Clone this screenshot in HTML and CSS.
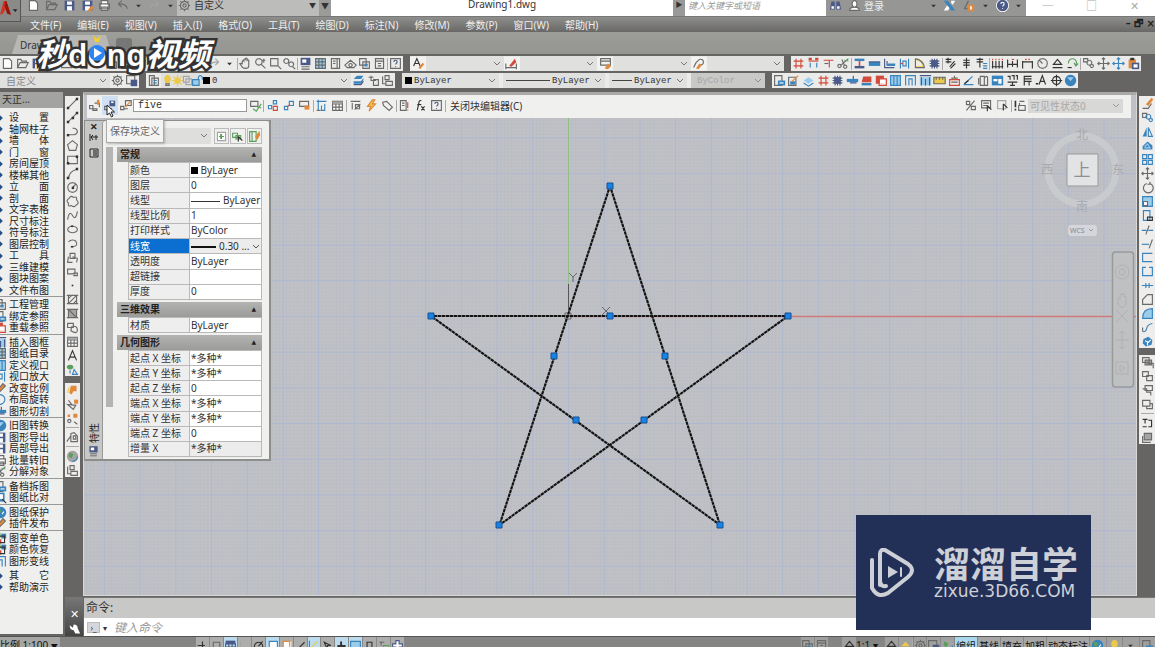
FILE: index.html
```html
<!DOCTYPE html>
<html lang="zh-CN">
<head>
<meta charset="utf-8">
<title>Drawing1.dwg</title>
<link rel="stylesheet" href="styles.css">
</head>
<body>
<div class="app">
  <header class="title">
    <div class="quick"><div class="tools plain" data-tools="new open save saveas print undo dot redo dot"></div>
      <label class="workspace-pick"><span class="ico" data-icon="gear"></span><select aria-label="工作空间"><option>自定义</option></select></label><span class="tri">▼</span></div>
    <h1>Drawing1.dwg</h1>
    <span class="arrow">▶</span>
    <input class="search" aria-label="搜索" placeholder="键入关键字或短语">
    <div class="account"><div class="tools plain two" data-tools="binoc user"></div><a href="#login">登录</a><div class="tools plain five" data-tools="dot exchange share dot help dot"></div></div>
    <div class="win"><button>─</button><button>□</button><button>✕</button></div>
    <button class="logo" aria-label="应用程序菜单"><svg viewBox="0 0 22 22"><path d="M0 15L4 0h3l5 15-4-1-2-5-3 5z" fill="#d8321f"/><path d="M6 0h1l5 15-4-1-3-9z" fill="#8d1a10"/><path d="M14 9h5l-2 3z" fill="#222"/></svg></button>
  </header>
  <nav class="menu"><a href="#f">文件(F)</a><a href="#e">编辑(E)</a><a href="#v">视图(V)</a><a href="#i">插入(I)</a><a href="#o">格式(O)</a><a href="#t">工具(T)</a><a href="#d">绘图(D)</a><a href="#n">标注(N)</a><a href="#m">修改(M)</a><a href="#p">参数(P)</a><a href="#w">窗口(W)</a><a href="#h">帮助(H)</a><span class="doc">– 🗗 ×</span></nav>
  <div class="tabs"><button class="tab">Drawing1</button><span class="plus"></span></div>
  <div class="bars">
    <div class="row">
      <div class="bar g403"><div class="tools std" data-tools="new open save print sheet zoomw cut copy paste brush undo dot undo dot redo2 dot | pan zoom zoomw zoomp | props calc page tree sheets table2 | help2"></div></div>
      <div class="bar g374"><span class="ico" data-icon="textstyle"></span><select aria-label="文字样式"><option></option></select><span class="ico" data-icon="dimstyle"></span><select aria-label="标注样式"><option></option></select><span class="ico" data-icon="tabstyle"></span><select aria-label="表格样式"><option></option></select><span class="ico" data-icon="leader"></span><select aria-label="引线样式"><option></option></select></div>
      <div class="bar g350"><div class="tools" data-tools="hash axis axis2 scissors | column wall wall2 door arc block | rebar bar2 bar3 | dims dimh dimh2 circle2 level loop | copyc move moveb clip"></div></div>
    </div>
    <div class="row">
      <div class="bar g139"><select class="dim" aria-label="工作空间"><option>自定义</option></select><div class="tools pair" data-tools="gear savews"></div></div>
      <div class="bar g248"><span class="ico" data-icon="layers"></span><div class="layer"><div class="tools four" data-tools="bulb sun freeze lock"></div><span class="sw"></span><select class="mono" aria-label="图层"><option>0</option></select></div><div class="tools three" data-tools="layer2 layprev laystate"></div></div>
      <div class="bar g363 bylayer"><label class="c95"><span class="sw"></span><select class="mono" aria-label="颜色"><option>ByLayer</option></select></label><label class="c102"><span class="ln"></span><select class="mono short" aria-label="线型"><option>ByLayer</option></select></label><label class="c78"><span class="ln"></span><select class="mono short" aria-label="线宽"><option>ByLayer</option></select></label><label class="c74 off"><select class="mono" disabled aria-label="打印样式"><option>ByColor</option></select></label></div>
      <div class="bar g306"><div class="tools" data-tools="page2 pencilp layer3 hash block wall3 brickr copyr grid2 gate win ruler house slope sheetg tableb scale flag textA target globe"></div></div>
    </div>
  </div>
  <div class="work">
    <aside class="tree">
      <h2>天正...</h2>
      <ul>
        <li class="sp"><i></i><span>设</span><span>置</span></li><li><i></i>轴网柱子</li><li class="sp"><i></i><span>墙</span><span>体</span></li><li class="sp"><i></i><span>门</span><span>窗</span></li><li><i></i>房间屋顶</li><li><i></i>楼梯其他</li><li class="sp"><i></i><span>立</span><span>面</span></li><li class="sp"><i></i><span>剖</span><span>面</span></li><li><i></i>文字表格</li><li><i></i>尺寸标注</li><li><i></i>符号标注</li><li><i></i>图层控制</li><li class="sp"><i></i><span>工</span><span>具</span></li><li><i></i>三维建模</li><li><i></i>图块图案</li><li><i></i>文件布图</li>
        <li class="sep"></li>
        <li><b data-icon="sheets"></b>工程管理</li><li><b data-icon="page2"></b>绑定参照</li><li><b data-icon="copyr"></b>重载参照</li>
        <li class="sep"></li>
        <li><b data-icon="win"></b>插入图框</li><li><b data-icon="calc"></b>图纸目录</li><li><b data-icon="grid2"></b>定义视口</li><li><b data-icon="door"></b>视口放大</li><li><b data-icon="brush"></b>改变比例</li><li><b data-icon="rotb"></b>布局旋转</li><li><b data-icon="wall3"></b>图形切割</li>
        <li class="sep"></li>
        <li><b data-icon="globe"></b>旧图转换</li><li><b data-icon="save"></b>图形导出</li><li><b data-icon="save"></b>局部导出</li><li><b data-icon="print"></b>批量转旧</li><li><b data-icon="scissors"></b>分解对象</li>
        <li class="sep"></li>
        <li><b data-icon="page2"></b>备档拆图</li><li><b data-icon="zoomb"></b>图纸比对</li>
        <li class="sep"></li>
        <li><b data-icon="globeg"></b>图纸保护</li><li><b data-icon="brush"></b>插件发布</li>
        <li class="sep"></li>
        <li><b data-icon="colors"></b>图变单色</li><li><b data-icon="colors"></b>颜色恢复</li><li><b data-icon="gate"></b>图形变线</li>
        <li class="sep clear"></li>
        <li class="sp"><i></i><span>其</span><span>它</span></li><li><i></i>帮助演示</li>
      </ul>
    </aside>
    <div class="main">
      <div class="stage">
        <div class="side">
          <div class="tools vert" data-tools="line xline pline polygon rect arc2 circle cloud spline ellipse earc insert mkblock point hatch grad region table A addsel"></div>
          <div class="tools vert" data-tools="bulbo brusho ptso | shape | globeg2 laystate"></div>
        </div>
        <main class="frame">
          <div class="bedit">
            <div class="tools b3" data-tools="bedit bsave bsaveas"></div>
            <input class="mono name" aria-label="块名" value="five">
            <div class="tools b15" data-tools="bcheck | bpar bcon battr | bdim table | bprop bolt tag | bvar fx help2 |"></div>
            <button class="close">关闭块编辑器(C)</button>
            <div class="tools b4" data-tools="pct vis1 vis2 | vis3"></div>
            <select class="vis" disabled aria-label="可见性状态"><option>可见性状态0</option></select>
          </div>
          <div class="canvas">
            <svg class="drawing" viewBox="84 118 1052 478" preserveAspectRatio="xMinYMin slice">
              <defs>
                <pattern id="minor" x="568" y="316" width="3.57" height="3.57" patternUnits="userSpaceOnUse"><path d="M0 0H3.57M0 0V3.57" stroke="#b0b5c6" stroke-width=".4"/></pattern>
                <pattern id="major" x="568" y="316" width="35.7" height="35.7" patternUnits="userSpaceOnUse"><path d="M0 .5H35.7M.5 0V35.7" stroke="#acb5d4" stroke-width=".8"/></pattern>
              </defs>
              <path fill="url(#minor)" d="M84 118h1052v478H84z"/><path fill="url(#major)" d="M84 118h1052v478H84z"/>
              <path d="M568.500 118V316" stroke="#92bd8c"/><path d="M568 316.500H1136" stroke="#d07a7a" stroke-width="1.500"/>
              <g stroke="#888" fill="none"><path d="M568.500 284v32" stroke="#555"/><path d="M565 313h6v6h-6zM569 273l4 4 4-4M573 277v5M602 307l8 8M610 307l-8 8" stroke="#666"/></g>
              <path d="M610 186L720 525 431 316H788L499.500 525z" fill="none" stroke="#77787a" stroke-width="2"/>
              <path d="M610 186L720 525 431 316H788L499.500 525z" fill="none" stroke="#111" stroke-width="2" stroke-dasharray="3 1"/>
              <g fill="#1683e8" stroke="#1b4f8c"><path d="M607 183h6v6h-6zM785 313h6v6h-6zM717 522h6v6h-6zM496 522h6v6h-6zM428 313h6v6h-6zM607 313h6v6h-6zM662 353h6v6h-6zM641 417h6v6h-6zM573 417h6v6h-6zM551 353h6v6h-6z"/></g>
              <circle cx="1082" cy="170" r="34" fill="none" stroke="#c9cace" stroke-width="7"/>
              <path d="M1067 154h31v32h-31z" fill="#e2e3e5" stroke="#999"/>
              <g class="compass" text-anchor="middle"><text x="1082" y="139">北</text><text x="1082" y="211">南</text><text x="1047" y="174">西</text><text x="1118" y="174">东</text><text class="up" x="1082" y="176">上</text></g>
              <rect x="1068" y="225" width="29" height="11" rx="3" fill="#d5d6dc"/><text class="wcs" x="1070" y="233">WCS</text><path d="M1089 229l2 2 2-2" fill="none" stroke="#999"/>
              <rect x="1112.500" y="252" width="21" height="135" rx="3" fill="#bfc0c2" stroke="#999a9c" stroke-width="1.500"/>
              <g fill="none" stroke="#b0b1b4"><circle cx="1122" cy="272" r="7"/><circle cx="1122" cy="272" r="3"/><path d="M1118 305v-6q1-2 2 0v-4q1-2 2 0v-1q1-2 2 0v3q1-2 2 0v7q-3 6-8 1zM1116 310l12 12M1128 310l-12 12M1122 331v18M1115 340h14M1119 334l3-3 3 3M1119 346l3 3 3-3M1116 362h12v12h-12zM1120 365l5 3-5 4z"/></g>
            </svg>
            <section class="palette">
              <div class="grip"><span class="x">✕</span><svg viewBox="0 0 10 28"><path d="M1 3v7M2 6h7M4 4L2 6l2 3M7 4v5M1 18h8v8H1z" stroke="#222" fill="none"/><path d="M4 20h4M4 22h4M4 24h4" stroke="#111"/></svg><span class="cap">特性</span><b data-icon="props"></b></div>
              <div class="pbody">
                <div class="ptop"><select aria-label="对象类型"><option></option></select><div class="tools" data-tools="addg picksel quick"></div></div>
                <h3>常规<i>▲</i></h3>
                <table class="t9"><tr><th>颜色</th><td><span class="sw"></span> ByLayer</td></tr><tr><th>图层</th><td>0</td></tr><tr><th>线型</th><td><span class="thin"></span>ByLayer</td></tr><tr><th>线型比例</th><td>1</td></tr><tr><th>打印样式</th><td>ByColor</td></tr><tr class="on"><th>线宽</th><td><span class="thick"></span>0.30 ...<svg viewBox="0 0 8 6"><path d="M1 1l3 3 3-3" fill="none" stroke="#555"/></svg></td></tr><tr><th>透明度</th><td>ByLayer</td></tr><tr><th>超链接</th><td></td></tr><tr><th>厚度</th><td>0</td></tr></table>
                <h3>三维效果<i>▲</i></h3>
                <table class="t1"><tr><th>材质</th><td>ByLayer</td></tr></table>
                <h3>几何图形<i>▲</i></h3>
                <table class="t7"><tr><th>起点 X 坐标</th><td>*多种*</td></tr><tr><th>起点 Y 坐标</th><td>*多种*</td></tr><tr><th>起点 Z 坐标</th><td>0</td></tr><tr><th>端点 X 坐标</th><td>*多种*</td></tr><tr><th>端点 Y 坐标</th><td>*多种*</td></tr><tr><th>端点 Z 坐标</th><td>0</td></tr><tr class="ro"><th>增量 X</th><td>*多种*</td></tr></table>
              </div>
            </section>
            <div class="tip" role="tooltip">保存块定义</div>
            <svg class="cursor" viewBox="0 0 10 14"><path d="M1 1v10l2.500-2 2 4 1.500-1-2-4h3.500z" fill="#fff" stroke="#222"/></svg>
          </div>
        </main>
        <div class="side right">
          <div class="tools vert" data-tools="erase copyb mirror offset array move rotate scaleb stretch trim extend brk1 brk2 join chamfer fillet blend explode"></div>
          <div class="tools vert" data-tools="ord1 ord2 ord3 ord4 | textord hatchord"></div>
        </div>
      </div>
      <div class="cmd">
        <div class="handle"><span>✕</span><b data-icon="wrench"></b></div>
        <div class="lines"><div class="hist">命令:</div><label class="entry"><span class="prompt">›_</span><span class="tri">▾</span><input aria-label="命令行" placeholder="键入命令"></label></div>
      </div>
    </div>
  </div>
  <footer class="status">
    <span class="ratio">比例 1:100 <small>▼</small></span>
    <div class="tools" data-tools="stplus stsnap sgrid stgrey stpol stw sto stang stblue stcur stcross sfill strect stgreen stplus2"></div>
    <div class="sright"><div class="tools s2" data-tools="sheets table2"></div><div class="tools s1" data-tools="level"></div><span>1:1 ▾</span><div class="tools s5" data-tools="level level2 | gear savews globeg2"></div><button class="act">编组</button><button>基线</button><button>填充</button><button>加粗</button><button>动态标注</button><div class="tools s4" data-tools="globeg bulb dot page2"></div></div>
  </footer>
  <div class="mark"><span class="zh">秒</span><span class="en">d</span><span class="en play"><span>o</span><svg viewBox="0 0 20 30"><path d="M6 0l4 4 4-4-2 7H8z" fill="#f5d02a"/><circle cx="10" cy="18" r="8" fill="#2d86f0"/><path d="M7 13l8 5-8 5z" fill="#fff"/></svg></span><span class="en">ng</span><span class="zh">视频</span></div>
  <div class="brand"><svg viewBox="0 0 46 50" fill="none" stroke="#cdd0d6" stroke-linecap="round"><path d="M10 37V6q0-5 5-4l23 14q8 6 0 13L18 45q-10 6-16-5V12" stroke-width="4" stroke-linejoin="round"/><path d="M10 32q0 7 6 6" stroke-width="4"/><path d="M18 18l10 6-10 6z" fill="#cdd0d6" stroke="none"/><path d="M31 20v8" stroke-width="2"/></svg><div><strong>溜溜自学</strong><span>zixue.3D66.COM</span></div></div>
</div>
<script src="app.js"></script>
</body>
</html>
```
FILE: styles.css
```css
*{box-sizing:border-box}
body{margin:0;height:100vh;overflow:hidden;font:10px "Noto Sans","Noto Sans CJK SC",sans-serif;color:#333;background:#666563}
button,input,select{font:inherit;color:inherit;border:0;padding:0;margin:0;background:none;border-radius:0;min-width:0}
a{color:inherit;text-decoration:none}
h1,h2,h3,ul{margin:0;padding:0;font-weight:400;font-size:10px}
select{appearance:none;flex:1;height:100%;padding:0 2px;background:url("data:image/svg+xml,%3Csvg xmlns='http://www.w3.org/2000/svg' width='8' height='6'%3E%3Cpath d='M1 1l3 3 3-3' fill='none' stroke='%23777'/%3E%3C/svg%3E") no-repeat right 3px center;overflow:hidden}
.mono{font-family:"Liberation Mono","Noto Sans CJK SC",monospace}
.app{position:relative;display:flex;flex-direction:column;height:calc(100vh + 6px)}

.tools{display:flex;align-items:center;flex:1;min-width:0;height:100%}
.tools button{flex:1;height:100%;display:flex;align-items:center;justify-content:center}
.tools svg,[data-icon] svg{width:13px;height:13px;flex:none;display:block}
.tools .bar-sep{width:1px;height:12px;background:#aaa;flex:none}
.ico{display:flex;align-items:center;justify-content:center;width:15px;flex:none}
.vert{flex-direction:column;background:#eeedec;height:auto}
.vert button{width:100%}
.vert .bar-sep{width:13px;height:1px}
.sw{width:7px;height:7px;background:#000;display:inline-block;flex:none}
.tri{font-size:8px}

.title{display:flex;height:22px;margin-top:-6px;flex:none;align-items:stretch;background:#fff}
.quick{width:331px;padding-left:25px;background:#9b9b9a;display:flex;align-items:center}
.quick .tools{flex:none;width:152px}
.plain button[aria-label="dot"]{flex:none;width:14px}
.workspace-pick{flex:1;display:flex;height:100%;background:#bcbcbb;align-items:center}
.workspace-pick select{background:none}
.workspace-pick::after{content:"▼";font-size:7px;padding-right:3px}
.quick .tri{width:12px;text-align:center}
h1{flex:1;text-align:center;line-height:20px;font-size:10px}
.arrow{width:12px;background:#999;font-size:7px;line-height:22px;text-align:center}
.search{width:141px;font-size:9px;font-style:italic;padding-left:3px}
.search::placeholder,.entry input::placeholder{color:#999}
.account{width:200px;background:#969695;display:flex;align-items:center;color:#eee}
.account .two{flex:none;width:38px}
.account a{width:62px}
.win{width:129px;display:flex;justify-content:space-around;color:#aaa;font-size:11px}
.logo{position:absolute;left:0;top:0;width:21px;height:22px;background:#8a8a89;border-right:1px solid #555;border-bottom:1px solid #555}
.logo svg{display:block}

.menu{height:16px;flex:none;display:flex;align-items:center;gap:16px;padding-left:30px;color:#eee;background:linear-gradient(#8e8e8c,#696866);border-top:1px solid #777}
.doc{margin-left:auto;color:#222;font:bold 10px "DejaVu Sans",sans-serif}
.tabs{height:22px;flex:none;background:linear-gradient(#9d9d9a,#949491);display:flex;align-items:flex-end;padding-left:12px}
.tab{width:100px;height:19px;padding-left:8px;text-align:left;background:#b7b7b5;clip-path:polygon(0 100%,6px 0,94px 0,100% 100%)}
.plus{width:16px;height:12px;margin:0 0 4px 4px;background:#777;border-radius:3px}

.bars{flex:none;padding:2px 0;display:flex;flex-direction:column;gap:2px;height:36px}
.row{display:flex;gap:7px;height:15px}
.bar{display:flex;background:#ebebea;flex:none;align-items:center}
.bar select{background-color:#e0e0df}
.g403{width:403px}.g374{width:374px}.g350{width:350px}.g139{width:139px}.g248{width:249px}.g363{width:363px}.g306{width:306px}
.g374 .ico{width:16px;background:#f2f2f1}
.dim{color:#888}
.bar .dim{padding-left:6px}
.pair{flex:none;width:29px}
.layer{flex:1;display:flex;align-items:center;background:#e0e0df;height:100%}
.four{flex:none;width:42px;padding-left:1px}.three{flex:none;width:44px}
.bylayer{gap:4px}
.bylayer label{display:flex;align-items:center;height:100%;background:#e0e0df}
.bar .mono{font-size:9px}
.bylayer .sw{margin-left:3px}
.c95{width:97px}.c102{width:102px}.c78{width:78px}.c74{width:74px}
.ln{flex:1;height:1px;background:#444;margin-left:3px}
.bylayer .short{flex:none;width:55px}
.off{color:#999}.bylayer .off,.off select{background-color:#c9c9c8}
.bylayer .off select{padding-left:6px}

.work{flex:1;min-height:0;display:flex}
.tree{width:63px;margin:2px 2px 2px 0;background:#efefee;display:flex;flex-direction:column;flex:none}
.tree h2{height:16px;line-height:15px;padding-left:2px;background:#a3a3a2}
.tree ul{flex:1;min-height:0;margin:4px 0 41px;display:flex;flex-direction:column;list-style:none}
.tree li{flex:1;min-height:0;display:flex;align-items:center;padding-left:9px;position:relative;line-height:11px;color:#222}
.tree li.sp{justify-content:space-between;padding-right:14px}
.tree li i{position:absolute;left:-2px;width:4px;height:4px;background:#234e86;transform:rotate(45deg)}
.tree li b{position:absolute;left:-6px}
.tree li.sep{flex:none;height:3px;border-top:1px solid #999}
.tree li.clear{border:0}
.main{flex:1;min-width:0;display:flex;flex-direction:column}
.stage{flex:1;min-height:0;display:flex}
.side{width:15px;flex:none;display:flex;flex-direction:column;gap:7px;padding-top:6px}
.side .tools{flex:none}
.side button{flex:none;height:14px}
.side .bar-sep{margin:2px 0}
.right{width:16px;margin-left:2px}
.frame{flex:1;min-width:0;margin:2px 0 1px 3px;border:1px solid #d8d8d8;border-top:3px solid #a9a9a8;display:flex;flex-direction:column;background:#c0c1c5}
.bedit{height:23px;margin:0 5px 0 3px;background:#f0f0ef;display:flex;align-items:center;padding:1px 8px 3px 0;flex:none}
.b3{flex:none;width:46px}
.b3 button:nth-child(2){background:#cfe0f3}
.name{width:114px;height:13px;border:1px solid #999;background:#fff;padding-left:4px}
.b15{flex:none;width:199px}
.close{padding-left:4px}
.b4{flex:none;width:66px;margin-left:auto}
.vis{flex:none;width:95px;background-color:#cfcfce;color:#888;height:14px}
.canvas{flex:1;min-height:0;position:relative}
.drawing{position:absolute;inset:0;width:100%;height:100%}
.compass{font-size:12px;fill:#a8a9ae}
.compass .up{font-size:17px;fill:#8a9097}
.wcs{font-size:7px;fill:#888}

.palette{position:absolute;left:0;top:2px;width:187px;height:341px;display:flex;background:#c7c7c6;border:1px solid #8d8d8d;border-right-width:2px;border-bottom-width:2px}
.grip{width:17px;display:flex;flex-direction:column;align-items:center;padding-top:1px;flex:none;color:#222}
.grip .x{font-size:9px;line-height:9px;font-weight:700}
.grip svg{width:10px;height:28px}
.grip .cap{margin-top:auto;writing-mode:vertical-rl;text-orientation:sideways;transform:rotate(180deg);line-height:14px}
.grip b svg{width:11px;height:16px}
.pbody{flex:1;min-width:0;background:linear-gradient(#b4b4b4,#b4b4b4) 3px 26px/7px 260px no-repeat #f0f0ef;border-left:1px solid #999;padding:7px 7px 0 14px;border-radius:3px 3px 0 0}
.ptop{height:16px;display:flex;gap:3px;margin-bottom:3px}
.ptop select{background-color:#dededd}
.ptop .tools{flex:none;width:48px;gap:1px}
.ptop button{border:1px solid #bbb}
h3{height:15px;line-height:14px;background:linear-gradient(#b3b3b2,#9b9b9a);font-weight:700;padding:0 6px 0 3px;display:flex;justify-content:space-between;color:#222}
h3 i{font:6px "DejaVu Sans";line-height:14px}
table{border-collapse:collapse;width:calc(100% - 11px);margin:0 0 2px 11px;table-layout:fixed}
.t9{height:138px}.t1{height:16px}.t7{height:107px}
th,td{border:1px solid #b9b9b9;padding:0 0 0 1px;font-weight:400;text-align:left;line-height:13px;white-space:nowrap;overflow:hidden}
th{width:61px;background:#eee}
td{background:#fff}
.on th{background:#0a6fd0;color:#fff}
.on td,.ro td{background:#ececec}
.thin,.thick{display:inline-block;vertical-align:middle;width:29px;height:1px;background:#333;margin-right:3px}
.thick{width:25px;height:2px;background:#111}
.on svg{width:8px;height:6px;margin-left:3px}
.tip{position:absolute;left:22px;top:1px;padding:0 3px;height:24px;line-height:22px;background:#f4f4f3;border:1px solid #aaa;color:#666;box-shadow:1px 1px 2px #8888}
.cursor{position:absolute;left:22px;top:-14px;width:10px;height:14px}

.cmd{height:39px;flex:none;display:flex}
.handle{width:18px;display:flex;flex-direction:column;align-items:center;gap:1px;padding-top:9px;color:#fff;background:linear-gradient(#777,#444);flex:none;font-size:11px;line-height:15px}
.lines{flex:1;margin-left:1px;display:flex;flex-direction:column;border-top:1px solid #777}
.hist{flex:1;background:#c8c8c6;padding-left:2px;font-size:12px;line-height:20px}
.entry{height:18px;background:#fff;display:flex;align-items:center;padding-left:3px;gap:3px}
.prompt{width:13px;height:11px;line-height:9px;background:#d5d6dc;border:1px solid #bbb;font-size:8px;text-align:center}
.entry input{flex:1;font-size:12px;font-style:italic;padding-left:4px}

.status{height:17px;flex:none;display:flex;background:#858583;border-top:1px solid #555}
.ratio{width:60px;background:#a6a6a4;line-height:16px;color:#111;white-space:nowrap}
.ratio small{font-size:7px}
.status>.tools{flex:none;width:209px;margin-left:136px;background:#adadab}
.status>.tools button{border-right:1px solid #888}
.status>.tools button:is(:nth-child(3),:nth-child(6),:nth-child(9),:nth-child(11),:nth-child(12)){background:#bcdcee}
.sright{margin-left:auto;width:355px;display:flex;align-items:center;color:#111}
.sright span{width:28px}
.sright .bar-sep{width:1px}
.sright button{border-left:1px solid #888}
.sright>button{background:#a6a6a4;height:100%;padding:0 1px}
.sright>.act{background:#a9d8ee}
.sright .tools{background:#a0a09e}
.sright .s2{flex:none;width:28px}.sright .s1{flex:none;width:15px;margin-left:13px}.sright .s5{flex:none;width:70px}

.mark{position:absolute;left:36px;top:32px;display:flex;align-items:center;height:40px;color:#fff;-webkit-text-stroke:5px #333;paint-order:stroke fill;font-weight:700}
.mark .zh{font-family:"Noto Sans CJK SC",sans-serif;font-size:32px;font-style:italic;line-height:40px}
.mark .en{font-family:"Noto Sans",sans-serif;font-size:31px;font-weight:600;line-height:40px;padding-top:4px}
.mark .play{position:relative}
.mark svg{position:absolute;left:0;top:5px;width:20px;height:30px}
.brand{position:absolute;right:64px;bottom:23px;width:235px;height:115px;background:#222f56;color:#cdd0d6;display:flex;align-items:center;gap:18px;padding-left:14px}
.brand svg{width:46px;height:50px}
.brand div{display:flex;flex-direction:column;gap:3px}
.brand strong{font:700 36px/34px "Noto Sans CJK SC",sans-serif}
.brand span{font:17px/18px "DejaVu Sans",sans-serif}
```
FILE: app.js
```js
// Each icon lists parts "<colour>[f] <path>" on a 16x16 grid; "f" fills the path.
const C = {k:'#6a6a6a',d:'#333',s:'#a4a4a4',b:'#3a84bd',l:'#9accec',r:'#d24a3a',g:'#5aa05c',o:'#e0893a',y:'#ecc94a',w:'#fff',n:'#4a5a88'};
const I = {
new:'wf M3 2h7l3 3v9H3z;k M3 2h7l3 3v9H3z',
open:'k M2 13V3h4l1 2h6v2M2 13l3-6h10l-3 6z',
save:'nf M2 2h12v12H2z;wf M5 3h6v4H5zM5 9h6v5H5z',
saveas:'nf M2 2h12v12H2z;wf M5 3h6v4H5zM5 9h6v5H5z;of M8 14l5-6 3 2-5 6z',
print:'wf M4 2h8v12H4z;k M4 6V2h8v4M2 6h12v6H2zM4 10h8v4H4z',
undo:'k M14 12C13 7 9 6 4 6M7 2L3 6l4 4', redo:'s M2 12C3 7 7 6 12 6M9 2l4 4-4 4', redo2:'s M2 12C3 7 7 6 12 6M9 2l4 4-4 4',
dot:'df M5 7h6l-3 3z',
gear:'k M8 3a5 5 0 1 0 .1 0M8 6a2 2 0 1 0 .1 0M8 1v2M8 13v2M1 8h2M13 8h2M3 3l1 1M12 12l1 1M13 3l-1 1M4 12l-1 1',
binoc:'nf M3 3h4v10H1zM9 3h4l2 10H9z;wf M3 9h3v3H3zM10 9h3v3h-3z', user:'wf M8 2a3 4 0 1 0 .1 0M2 14q0-4 6-4t6 4z;k M8 2a3 4 0 1 0 .1 0M2 14q0-4 6-4t6 4z',
exchange:'bf M1 2h5l9 12h-5z;wf M10 2h5l-3 5-2-2zM1 14h5l2-3-3-3z', share:'k M8 2L3 12h6;of M7 7h8v8H7z;wf M10 9h2v4h-2z',
help:'wf M8 0a8 8 0 1 0 .1 0;nf M8 1a7 7 0 1 0 .1 0;w M6 6q0-2 2-2t2 2q0 1-2 3M8 11v1', help2:'k M2 2h12v12H2z;n M6 6q0-2 2-2t2 2q0 1-2 3M8 11v1',
pan:'k M4 9V5q1-1 2 0V3q1-1 2 0V2q1-1 2 0v2q1-1 2 0v7q0 3-4 3t-5-3L1 8q1-1 3 1',
zoom:'k M6 2a4 4 0 1 0 .1 0M9 9l5 5M12 2v5M10 4h4', zoomw:'k M2 2h9v9H2zM11 11l4 4', zoomp:'k M4 2a3 3 0 1 0 .1 0M10 6a3 3 0 1 0 .1 0M12 12l3 3', zoomb:'bf M2 2h11v11H2z;wf M5 4h6v6H5z;d M10 10l5 5',
props:'nf M2 1h12v9H2z;wf M4 3h5v4H4z;k M3 12h10M3 15h10', calc:'lf M2 2h12v12H2z;k M2 2h12v12H2zM2 6h12M2 10h12M6 2v12M10 2v12',
page:'k M3 2h10v12H3zM10 2v12M5 5h3M5 8h3', tree:'k M1 10l7-6 7 6-3 3H4zM8 8a2 2 0 1 0 .1 0', sheets:'k M2 2h8v8H2zM6 6h8v8H6z;b M8 9h4M8 11h4', table2:'k M3 2h10v12H3zM3 5h10M6 8h4M6 11h4',
sheet:'k M2 3h12v10H2z',cut:'k M4 2l7 11M12 2L5 13',copy:'k M2 2h8v8H2zM6 6h8v8H6z',paste:'k M3 3h10v11H3z',brush:'of M2 13l9-11 3 3-9 9z;k M2 13l9-11 3 3-9 9z',
textstyle:'d M2 11L6 2l4 9M4 8h5;of M8 13l5-6 2 2-5 6z', dimstyle:'k M1 13h13M1 8v7M14 8v7;rf M5 11l7-9 2 4-6 6z', tabstyle:'k M2 2h12v8H2zM2 5h12;of M7 14l4-6 4 3-4 4z', leader:'k M2 13l3-6 4-4q5-1 5 3t-5 4;of M5 14l4-6 3 2-4 5z',
hash:'r M5 2v12M11 2v12M2 5h12M2 11h12', axis:'r M2 5h12;b M4 7v6M12 7v6;rf M2 1h4v3H2zM10 1h4v3h-4z', axis2:'r M2 4h12M9 4v9;k M3 8h5', scissors:'k M3 9a2 2 0 1 0 .1 0M10 10a2 2 0 1 0 .1 0M5 10l9-8M9 10L6 3;g M9 4l5 1',
column:'bf M2 2h12v3H2z;rf M7 5h2v6H7z;nf M2 11h12v3H2z', wall:'bf M1 6h14v5H1z;n M1 6h14', wall2:'n M2 2v11h12M5 5v5h9;bf M6 8h9v3H6z', wall3:'bf M1 6h14v4H1z;n M5 11h8M9 2v4', door:'b M3 2v12M13 2v12M6 5h4v6H6z;r M3 8h3', arc:'y M3 3q8 1 10 9H3z;k M3 2v11h11Q13 4 3 2', block:'nf M4 4h8v8H4z;n M5 2v12M8 2v12M11 2v12M2 5h12M2 8h12M2 11h12',
rebar:'d M2 3h7M5 1v7M2 6h7M7 12l6-7M8 14l6-6', bar2:'d M4 4h8M4 7h8M8 1v13M4 10h8', bar3:'d M2 3h8M2 6h8M6 1v12;b M10 8h5M10 11h5M10 14h5',
dims:'d M2 5v9M6 5v9M10 5v9M14 5v9M1 12h14;r M2 2v2M6 2v2M10 2v2M14 2v2', dimh:'d M2 3v10M14 3v10M2 9h12M8 5v7;r M7 3h3', dimh2:'d M2 5v9M14 5v9M2 6h12;r M5 3h2M9 3h2', circle2:'k M8 2a6 6 0 1 0 .1 0M8 8L4 4', level:'d M8 3l5 6H3zM2 13h12', level2:'yf M8 3l5 6H3z;b M2 13h12', loop:'g M3 8a5 5 0 1 1 9 2M10 7l2 4 3-3;d M2 13h5',
copyc:'k M2 2h5v4H2zM9 4a3 3 0 1 0 .1 0M12 9a2 2 0 1 0 .1 0', move:'k M8 1v14M1 8h14M6 3l2-2 2 2M6 13l2 2 2-2M3 6L1 8l2 2M13 6l2 2-2 2', moveb:'b M8 1v14M1 8h14M6 3l2-2 2 2M6 13l2 2 2-2M3 6L1 8l2 2M13 6l2 2-2 2', clip:'of M2 3h9v11H2z;nf M6 7h9v8H6z;wf M8 9h5v4H8z;df M4 1h5v3H4z',
savews:'k M2 2h10v10H2z;nf M7 7h8v8H7z', layers:'k M3 2h6v12H3zM6 5h8v9H6z;b M8 8h4M8 11h4', bulb:'yf M8 1a5 5 0 0 0-3 8v3h6V9a5 5 0 0 0-3-8;k M6 12h4v2H6z', sun:'yf M8 4a4 4 0 1 0 .1 0;y M8 1v14M1 8h14M3 3l10 10M13 3L3 13', freeze:'s M3 3h7v7H3zM6 6h7v7H6z', lock:'lf M2 7h8v7H2z;b M2 7h8v7H2zM9 7V4q2-4 5 0v3',
layer2:'bf M2 6l4-4h8l-3 4zM2 9l9 0 3-4v3l-3 4H2z;n M2 13h9l3-4', layprev:'k M2 4h6M5 2v6h6M8 7h6v7H8z', laystate:'k M5 2h5v5H5zM6 9h8v5H6zM2 3v9h4', layer3:'lf M2 8l6-4 6 4-6 4z;b M2 11l6 4 6-4',
page2:'k M2 2h9v12H2z;bf M6 8h9v6H6z;w M8 11h5', pencilp:'k M2 4h9v10H2z;bf M4 9h6v4H4z;o M6 9l8-7', brickr:'rf M4 3h10v7H2z;bf M2 11h12v3H2z', copyr:'rf M1 2h10v10H1z;wf M6 6h6v6H6z;r M5 6h9v8H5z', grid2:'lf M2 2h12v12H2z;b M2 2h12v12H2zM6 2v12M10 2v12', gate:'b M2 14V2h12v12M6 14V6h4v8', win:'lf M1 4h14v10H1z;n M1 2h14M3 4v10M13 4v10M8 6v8', ruler:'yf M1 4h14v8H1z;k M1 4h14v8H1zM4 4v3M8 4v3M12 4v3', house:'r M2 7h12v7H2z;k M4 10h8M4 5h8M8 2v3', slope:'b M2 13h12M3 12l10-9;d M3 12l5-4', sheetg:'k M4 3h5v11H4zM9 5q4-4 4 0v9H9M2 5v8', tableb:'bf M1 2h14v12H1z;wf M3 6h5v3H3zM9 6h4v6H9z', scale:'d M2 3h3v4M7 2h3v5M12 2h2v5M2 10h12M8 10v4M5 14h6', flag:'d M4 2v12M4 3h9M4 6h9M4 9h9M10 9v5', textA:'d M5 13L9 2l4 11M7 9h5;df M1 11h3v2H1z', target:'d M8 3a5 5 0 1 0 .1 0M8 1v14M1 8h14', globe:'bf M8 1a7 7 0 1 0 .1 0;lf M4 4h8l-4 5z', globeg:'bf M8 1a7 7 0 1 0 .1 0;gf M4 3l5 2-2 5-4-2z;w M10 10l2-3', globeg2:'sf M8 1a7 7 0 1 0 .1 0;gf M4 3l5 2-2 5-4-2z;b M8 14a6 6 0 0 0 6-6',
rotb:'b M7 2a6 6 0 1 1-3 1M3 1v4h4', colors:'gf M2 1h6v6H2z;bf M9 2h6v6H9z;rf M4 9h5v5H4z;d M6 5h7v8H6z',
line:'k M3 13L13 3;df M1 12h3v3H1zM12 1h3v3h-3z', xline:'k M2 14L14 2;df M1 12h3v3H1zM7 7h3v3H7zM12 1h3v3h-3z', pline:'k M2 12h8q4-1 4-4t-4-4H8;df M1 11h3v3H1z', polygon:'k M8 2l6 5-2 7H4L2 7z', rect:'k M2 4h12v9H2z;df M1 11h3v3H1zM12 3h3v3h-3z', arc2:'k M3 14Q4 5 13 3;df M1 12h3v3H1zM12 1h3v3h-3z', circle:'k M8 2a6 6 0 1 0 .1 0M8 8l4-4;df M7 7h3v3H7z', cloud:'k M4 4q2-4 5-1 5-2 4 3 4 4 0 6-3 4-6 1-5 2-4-3-4-3 1-6', spline:'k M2 13q2-12 6-5t6-5', ellipse:'k M8 4a6 4 0 1 0 .1 0;df M6 3h3v2H6z', earc:'k M3 6q4-4 9-1 4 6-4 7;df M6 11h3v2H6z', insert:'k M5 3h6v6H5zM3 7l-1 7h6M8 7l6 2-1 5', mkblock:'k M2 5h9v6H2zM9 10h5v3H9', point:'df M7 7h2v2H7z', hatch:'k M3 3h10v10H3zM3 7l4-4M3 13L13 3M9 13l4-4M1 3h14M1 13h14', grad:'sf M3 3h10v10H3z;k M3 3h10v10H3zM1 3h14M1 13h14M4 4l8 8', region:'k M2 3h7v5H2zM7 7q7-2 7 4t-8 1z', table:'wf M2 3h12v11H2z;k M2 3h12v11H2zM2 6h12M2 10h12M6 6v8M10 6v8;sf M2 3h12v3H2z', A:'d M3 14L8 2l5 12M5 10h6', addsel:'gf M5 2a4 3 0 1 0 .1 0;b M10 8l4 6H8zM5 9v4',
bulbo:'of M6 2h7v7H9l-2 4-3-2z;y M4 4l-2 7', brusho:'of M10 2h5v5h-5z;k M3 3l5 6M2 8l7 6 3-5z', ptso:'of M9 2h5v5H9zM2 3h3v3H2z;k M4 9a2 2 0 1 0 .1 0M10 12l4 3', shape:'k M6 3l4-1 4 4v7H6zM1 13l5-7M9 6h3v4H9z',
bedit:'k M2 8h4v4H2zM6 12h5v2H6zM8 5h6v5;of M11 1h3v6h-3z', bsave:'k M2 9h4v4H2zM6 12h5;nf M8 2h7v7H8z;wf M10 3h3v2h-3z', bsaveas:'k M2 9h4v4H2zM6 12h5M8 2h7v6H8z;o M8 10l6-7', bcheck:'k M2 3h9v6H2z;g M5 12l4 3 6-9M8 9l7 2', bpar:'b M3 8h4v4H3zM9 2h4v4H9z;r M9 9h5v5H9z', bcon:'b M9 3h5v5H9zM3 9h4v4H3z;r M7 9l3-2', battr:'k M2 3h11v6H2z;of M8 8h6v5H8z', bdim:'b M2 3h12M4 1v13M12 6v8H8V8;k M2 14h5', bprop:'k M2 3h12M4 5v8M8 7h5v5H8zM7 13l7-7', bolt:'yf M9 1L3 9h4l-2 6 8-9H9l3-5z;o M9 1L3 9h4l-2 6 8-9H9l3-5z', tag:'k M2 4l5-1 7 7-4 4-7-6z', bvar:'k M3 2h7v12H3zM5 5h3M5 8h3;r M12 4v7M12 13v1', fx:'d M9 2Q6 1 6 5l-2 9M4 7h5M9 9l4 5M13 9l-4 5', pct:'k M3 14L13 2M3 3h4v4H3zM9 9h5v4H9z', vis1:'k M2 2h11v9H2zM4 5h7M4 8h5;d M9 8l5 5M9 8v7', vis2:'s M2 2h10v10H2z;d M9 6l5 5M9 6v8', vis3:'df M2 2h2v8H2zM2 12h2v2H2z;k M7 8h8v6H7zM8 3h6M8 5v3', addg:'wf M3 3h10v10H3z;s M3 3h10v10H3z;g M8 5v6M5 8h6M7 5v6', picksel:'g M2 4h6v5H2zM6 7h6v4H6z;d M9 8l5 5M9 8v6', quick:'g M2 2h8v12H2zM5 2v12;of M9 8l5-7 1 5-4 7z',
erase:'of M6 9l7-8 2 2-6 8z;k M2 14h7l4-6', copyb:'k M2 3h5v5H2z;b M9 4a3 3 0 1 0 .1 0M12 9a2 2 0 1 0 .1 0', mirror:'bf M7 3v11H2z;b M9 3v11h5z', offset:'bf M2 13V9l6-6 6 5v5z;l M5 11V9l3-3 3 5z', array:'b M2 2h5v5H2zM9 2h5v5H9zM2 9h5v5H2zM9 9h5v5H9z', rotate:'k M7 3a6 6 0 1 0 4 0M11 1v3H8', scaleb:'lf M2 2h12v12H2z;b M2 2h12v12H2z;wf M3 8h5v5H3z;k M3 8h5v5H3z', stretch:'b M3 2h8v12H3z;d M8 10h6v4H8z', trim:'b M1 9h6M9 9h6;k M10 3L6 14', extend:'b M1 9h9;k M14 3l-4 11', brk1:'b M14 3H2v10h12', brk2:'b M6 3H2v10h12V3h-4', join:'b M1 8h14M6 5v6M10 5v6', chamfer:'k M2 14V8l6-6h6v12z', fillet:'lf M2 14q0-12 12-12v12z;b M2 14q0-12 12-12v12z', blend:'b M2 13q4 1 5-4t7-6;k M2 8v5', explode:'bf M3 5l6-3 5 4-1 6-7 2-4-4z;w M5 7l4 2 3-3M8 9v4', ord1:'sf M5 5h8v6H5z;k M2 2h8v6H2zM5 5h8v6H5zM8 9h7v6', ord2:'k M2 2h7v6H2zM7 7h7v6H7z', ord3:'k M5 2h9v6H5zM2 6h5v4h5v4', ord4:'k M2 3h9v7H2zM7 10v3h7V7h-3', textord:'d M2 3h6M5 2v6M9 4h4v8h-4M2 12h5', hatchord:'sf M4 3h9v8H4z;k M4 3h9v8H4zM2 6v8h10',
wrench:'wf M2 4l4 3 1-4q5 0 5 5l3 6H9L7 10Q2 10 2 4',
stplus:'d M8 3v12M2 8h9', stsnap:'k M4 4h8v8H4z', sgrid:'nf M2 2h12v4H2z;n M2 6h12v9H2zM2 10h12M6 6v9M10 6v9', stgrey:'s M3 3v10h10', stpol:'d M8 4a5 5 0 1 0 .1 0M8 9l5-6', stw:'wf M4 3h10v12H4z;b M4 3h10v12H4z', sto:'wf M4 3h10v12H4z;o M4 3h8v8H4z', stang:'d M13 4L4 13h10', stblue:'b M3 2v12h11;y M4 12l9-9', stcur:'d M4 4l8 4H8v5z', stcross:'d M8 3v12M3 8h10M7 3v12M3 9h10', sfill:'lf M2 3h12v12H2z;b M2 3h12v12H2z', strect:'d M5 4h6v9H5z', stgreen:'k M3 4h6M5 3v5;g M8 8h6v6H8z', stplus2:'wf M6 2h4v4h4v4h-4v5H6v-5H2V6h4z;n M6 2h4v4h4v4h-4v5H6v-5H2V6h4z'
};
const svg = name => '<svg viewBox="0 0 16 16" aria-hidden="true">' + (I[name] || I.sheet).split(';').map(part => {
  const at = part.indexOf(' '), key = part.slice(0, at), c = C[key[0]];
  return `<path d="${part.slice(at + 1)}" fill="${key[1] ? c : 'none'}" stroke="${key[1] ? 'none' : c}" stroke-width="1.4"/>`;
}).join('') + '</svg>';
document.querySelectorAll('[data-tools]').forEach(bar => {
  bar.innerHTML = bar.dataset.tools.trim().split(/\s+/).map(n => n === '|' ? '<span class="bar-sep"></span>' : `<button aria-label="${n}">${svg(n)}</button>`).join('');
});
document.querySelectorAll('[data-icon]').forEach(el => { el.innerHTML = svg(el.dataset.icon); });
```
